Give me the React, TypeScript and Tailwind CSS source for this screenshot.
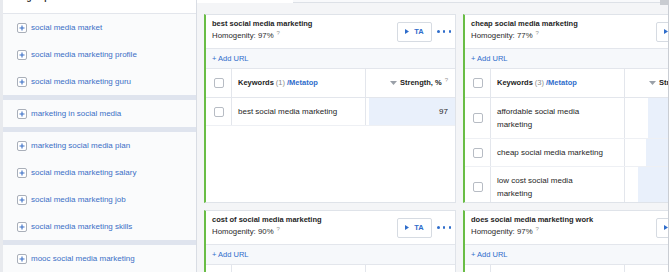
import React from 'react'

type Row = { text: string; strength?: number; bar: number }

type Cluster = {
  title: string
  homogeneity: number
  rows: Row[]
}

const groups: string[][] = [
  ['social media market', 'social media marketing profile', 'social media marketing guru'],
  ['marketing in social media'],
  ['marketing social media plan', 'social media marketing salary', 'social media marketing job', 'social media marketing skills'],
  ['mooc social media marketing'],
]

const clusters: Cluster[] = [
  {
    title: 'best social media marketing',
    homogeneity: 97,
    rows: [{ text: 'best social media marketing', strength: 97, bar: 97 }],
  },
  {
    title: 'cheap social media marketing',
    homogeneity: 77,
    rows: [
      { text: 'affordable social media marketing', bar: 74 },
      { text: 'cheap social media marketing', bar: 76 },
      { text: 'low cost social media marketing', bar: 85 },
    ],
  },
  {
    title: 'cost of social media marketing',
    homogeneity: 90,
    rows: [{ text: 'cost of social media marketing', strength: 90, bar: 90 }],
  },
  {
    title: 'does social media marketing work',
    homogeneity: 97,
    rows: [{ text: 'does social media marketing work', bar: 97 }],
  },
]

function PlusBox() {
  return (
    <span className="flex h-[10px] w-[10px] shrink-0 items-center justify-center rounded-[2px] border border-[#a9afb9] bg-white">
      <svg width="6" height="6" viewBox="0 0 6 6">
        <path d="M3 0.5V5.5M0.5 3H5.5" stroke="#3a6fc6" strokeWidth="1.1" />
      </svg>
    </span>
  )
}

function Checkbox() {
  return <span className="block h-[10px] w-[10px] rounded-[2px] border border-[#b7bcc4] bg-white" />
}

function Sidebar() {
  return (
    <aside className="ml-[3px] flex w-[194px] shrink-0 flex-col border-r border-[#d9dde4] bg-[#fafbfc]">
      <div className="h-[14px] overflow-hidden border-b border-[#e3e6ec] bg-white pl-[11px]">
        <div className="-mt-[8px] text-[8px] font-bold leading-[12px] text-[#222]">All groups</div>
      </div>
      {groups.map((group, gi) => (
        <div key={gi} className="flex flex-col">
          {gi > 0 && <div className="h-[5px] bg-[#dfe4ee]" />}
          {group.map((name) => (
            <div key={name} className="flex h-[27px] items-center gap-[4px] pl-[14px]">
              <PlusBox />
              <span className="text-[8px] text-[#3a6fc6]">{name}</span>
            </div>
          ))}
        </div>
      ))}
    </aside>
  )
}

function ClusterCard({ cluster }: { cluster: Cluster }) {
  return (
    <div className="flex h-[189px] w-[252px] flex-col overflow-hidden border border-l-2 border-[#dfe3e9] border-l-[#69bd45] bg-white">
      {/* title + actions */}
      <div className="flex h-[34px] shrink-0 justify-between border-b border-[#e3e6ec] pl-[6px] pr-[4px]">
        <div className="flex flex-col pt-[3px]">
          <div className="text-[7.5px] font-bold leading-[12px] text-[#1e1e1e]">{cluster.title}</div>
          <div className="text-[7.8px] leading-[12px] text-[#2b2b2b]">
            Homogenity: {cluster.homogeneity}%
            <sup className="ml-[3px] text-[6px] text-[#999]">?</sup>
          </div>
        </div>
        <div className="flex items-center gap-[5px]">
          <button className="flex h-[20px] w-[35px] items-center justify-center gap-[5px] rounded-[2px] border border-[#d6dbe2] bg-white">
            <svg width="4" height="5" viewBox="0 0 4 5">
              <path d="M0 0L4 2.5L0 5Z" fill="#2f6dcb" />
            </svg>
            <span className="text-[7.5px] font-bold text-[#2f6dcb]">TA</span>
          </button>
          <div className="flex w-[14px] items-center justify-between">
            <span className="h-[2.5px] w-[2.5px] rounded-full bg-[#2f6dcb]" />
            <span className="h-[2.5px] w-[2.5px] rounded-full bg-[#2f6dcb]" />
            <span className="h-[2.5px] w-[2.5px] rounded-full bg-[#2f6dcb]" />
          </div>
        </div>
      </div>

      {/* add url */}
      <div className="flex h-[20px] shrink-0 items-center border-b border-[#e3e6ec] bg-[#f6f8fb] pl-[6px] text-[7.5px] text-[#2f6dcb]">
        + Add URL
      </div>

      {/* table header */}
      <div className="flex h-[29px] shrink-0 border-b border-[#e3e6ec]">
        <div className="flex w-[26px] shrink-0 items-center justify-center border-r border-[#e3e6ec]">
          <Checkbox />
        </div>
        <div className="flex w-[134px] shrink-0 items-center border-r border-[#e3e6ec] pl-[6px] text-[7.5px]">
          <span className="font-bold text-[#222]">Keywords</span>
          <span className="ml-[2px] text-[#888]">({cluster.rows.length})</span>
          <span className="ml-[2px] font-bold text-[#2f6dcb]">/Metatop</span>
        </div>
        <div className="flex flex-1 items-center justify-end whitespace-nowrap pr-[7px] text-[7.5px]">
          <svg width="7" height="4" viewBox="0 0 7 4" className="mr-[3px]">
            <path d="M0 0H7L3.5 4Z" fill="#9aa0a8" />
          </svg>
          <span className="font-bold text-[#222]">Strength, %</span>
          <sup className="ml-[3px] text-[6px] text-[#999]">?</sup>
        </div>
      </div>

      {/* rows */}
      <div className="flex flex-1 flex-col">
        {cluster.rows.map((row) => (
          <div key={row.text} className="flex min-h-[27px] border-b border-[#eef0f4]">
            <div className="flex w-[26px] shrink-0 items-center justify-center border-r border-[#e3e6ec]">
              <Checkbox />
            </div>
            <div className="flex w-[134px] shrink-0 items-center border-r border-[#e3e6ec] py-[7px] pl-[6px] pr-[20px] text-[8px] leading-[13px] text-[#262626]">
              {row.text}
            </div>
            <div className="flex flex-1 justify-end">
              <div className="flex items-center justify-end bg-[#e9f0fb] pr-[7px] text-[8px] text-[#262626]" style={{ width: `${row.bar}%` }}>
                {row.strength ?? ''}
              </div>
            </div>
          </div>
        ))}
      </div>
    </div>
  )
}

export default function App() {
  return (
    <div className="relative flex h-[272px] w-[669px] overflow-hidden bg-[#e8eaee] font-['Liberation_Sans',Arial,sans-serif]">
      <Sidebar />

      <main className="flex min-w-0 flex-1 flex-col overflow-hidden border-r border-[#c9cdd3] bg-[#f4f5f7]">
        <div className="flex h-[3px] shrink-0">
          <div className="w-[96px] overflow-hidden bg-white pl-[8px]">
            <div className="-mt-[8px] whitespace-nowrap text-[8px] leading-[12px] text-[#333]">social media market</div>
          </div>
          <div className="flex-1 border-b border-[#dde1e7] bg-[#f8f9fb]" />
        </div>

        <div className="grid grid-cols-[252px_252px] gap-x-[7px] gap-y-[7px] pl-[7px] pt-[11px]">
          {clusters.map((c) => (
            <ClusterCard key={c.title} cluster={c} />
          ))}
        </div>
      </main>

      <div className="absolute right-0 top-0 h-[5px] w-[9px] bg-[#c9ccd1]" />
    </div>
  )
}
